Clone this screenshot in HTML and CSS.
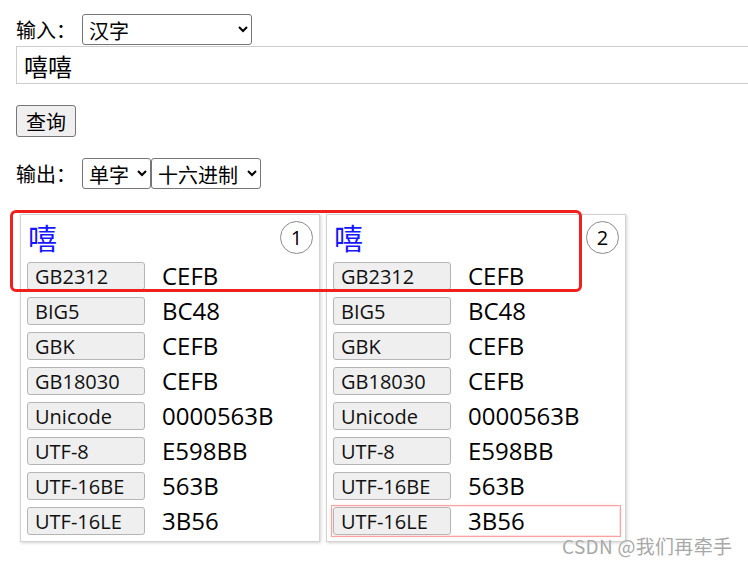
FILE: index.html
```html
<!DOCTYPE html>
<html lang="zh">
<head>
<meta charset="utf-8">
<title>编码查询</title>
<link rel="stylesheet" href="styles.css">
</head>
<body>
<div class="page">
  <div class="line">
    <span class="lbl">输入：</span>
    <select class="sel sel-in"><option>汉字</option></select>
  </div>
  <input class="text-in" type="text" value="嘻嘻">
  <button class="btn">查询</button>
  <div class="line line-out">
    <span class="lbl">输出：</span>
    <select class="sel sel-mode"><option>单字</option></select>
    <select class="sel sel-base"><option>十六进制</option></select>
  </div>
  <div class="cards">
    <div class="card">
      <div class="card-head"><span class="ch">嘻</span><span class="num">1</span></div>
      <div class="rows">
        <div class="row"><span class="tag">GB2312</span><span class="val">CEFB</span></div>
        <div class="row"><span class="tag">BIG5</span><span class="val">BC48</span></div>
        <div class="row"><span class="tag">GBK</span><span class="val">CEFB</span></div>
        <div class="row"><span class="tag">GB18030</span><span class="val">CEFB</span></div>
        <div class="row"><span class="tag">Unicode</span><span class="val">0000563B</span></div>
        <div class="row"><span class="tag">UTF-8</span><span class="val">E598BB</span></div>
        <div class="row"><span class="tag">UTF-16BE</span><span class="val">563B</span></div>
        <div class="row"><span class="tag">UTF-16LE</span><span class="val">3B56</span></div>
      </div>
    </div>
    <div class="card">
      <div class="card-head"><span class="ch">嘻</span><span class="num">2</span></div>
      <div class="rows">
        <div class="row"><span class="tag">GB2312</span><span class="val">CEFB</span></div>
        <div class="row"><span class="tag">BIG5</span><span class="val">BC48</span></div>
        <div class="row"><span class="tag">GBK</span><span class="val">CEFB</span></div>
        <div class="row"><span class="tag">GB18030</span><span class="val">CEFB</span></div>
        <div class="row"><span class="tag">Unicode</span><span class="val">0000563B</span></div>
        <div class="row"><span class="tag">UTF-8</span><span class="val">E598BB</span></div>
        <div class="row"><span class="tag">UTF-16BE</span><span class="val">563B</span></div>
        <div class="row row-hl"><span class="tag">UTF-16LE</span><span class="val">3B56</span></div>
      </div>
    </div>
    <div class="mark"></div>
  </div>
  <div class="watermark">CSDN @我们再牵手</div>
</div>
</body>
</html>
```

FILE: styles.css
```css
html, body {
  margin: 0;
  padding: 0;
  overflow: hidden;
  background: #fff;
}
body {
  font-family: "Open Sans", "Noto Sans CJK SC", sans-serif;
  color: #000;
}
.page {
  position: relative;
  width: 748px;
  height: 564px;
  padding: 14px 0 0 16px;
  box-sizing: border-box;
}
.line {
  display: flex;
  align-items: center;
  height: 31px;
}
.lbl {
  width: 66px;
  font-size: 20px;
  font-family: "Noto Sans CJK SC", sans-serif;
}
.sel {
  height: 31px;
  font-family: "Noto Sans CJK SC", sans-serif;
  font-size: 20px;
  color: #000;
  background: #fff;
  border: 1px solid #767676;
  border-radius: 3px;
  padding: 0 2px;
  margin: 0;
}
.sel-in { width: 170px; }
.sel-mode { width: 69px; }
.sel-base { width: 110px; margin-left: 0; }
.text-in {
  display: block;
  margin: 1px 0 0 0;
  width: 760px;
  height: 38px;
  box-sizing: border-box;
  border: 1px solid #cccccc;
  padding: 0 7px;
  font-family: "Noto Sans CJK SC", sans-serif;
  font-size: 24px;
  color: #000;
  outline: none;
}
.btn {
  display: block;
  margin-top: 21px;
  width: 60px;
  height: 32px;
  padding: 0;
  font-family: "Noto Sans CJK SC", sans-serif;
  font-size: 20px;
  color: #000;
  background: #efefef;
  border: 1px solid #767676;
  border-radius: 3px;
}
.line-out {
  margin-top: 21px;
}
.cards {
  position: relative;
  display: flex;
  align-items: flex-start;
  gap: 6px;
  margin: 25px 0 0 4px;
}
.card {
  width: 300px;
  box-sizing: border-box;
  border: 1px solid #d3d3d3;
  box-shadow: 1px 1px 3px rgba(0, 0, 0, 0.18);
  padding: 6px;
  background: #fff;
}
.card-head {
  display: flex;
  justify-content: space-between;
  align-items: flex-start;
  height: 33px;
  margin-bottom: 8px;
}
.ch {
  font-family: "Noto Sans CJK SC", sans-serif;
  font-size: 29px;
  line-height: 33px;
  color: #1515ff;
  margin-left: 1px;
}
.num {
  width: 31px;
  height: 31px;
  border: 1px solid #8a8a8a;
  border-radius: 50%;
  display: flex;
  align-items: center;
  justify-content: center;
  font-size: 20px;
  line-height: 1;
}
.rows {
  display: flex;
  flex-direction: column;
  gap: 7px;
}
.row {
  display: flex;
  align-items: center;
  height: 28px;
}
.tag {
  width: 118px;
  height: 28px;
  box-sizing: border-box;
  background: #efefef;
  border: 1px solid #b5b5b5;
  border-radius: 3px;
  padding-left: 7px;
  font-size: 20px;
  line-height: 28px;
  color: #111;
}
.val {
  margin-left: 17px;
  font-size: 24px;
  line-height: 28px;
}
.row-hl {
  outline: 1px solid #f7a3a3;
  outline-offset: 1px;
  box-shadow: 0 0 4px rgba(255, 60, 60, 0.35);
}
.mark {
  position: absolute;
  left: -10px;
  top: -4px;
  width: 572px;
  height: 82px;
  box-sizing: border-box;
  border: 3px solid #f0201c;
  border-radius: 6px;
  pointer-events: none;
}
.watermark {
  position: absolute;
  left: 562px;
  top: 532px;
  font-family: "Noto Sans CJK SC", sans-serif;
  font-size: 19px;
  letter-spacing: 0.3px;
  color: #a8a8a8;
  text-shadow: 0 0 1px #fff;
}
```
